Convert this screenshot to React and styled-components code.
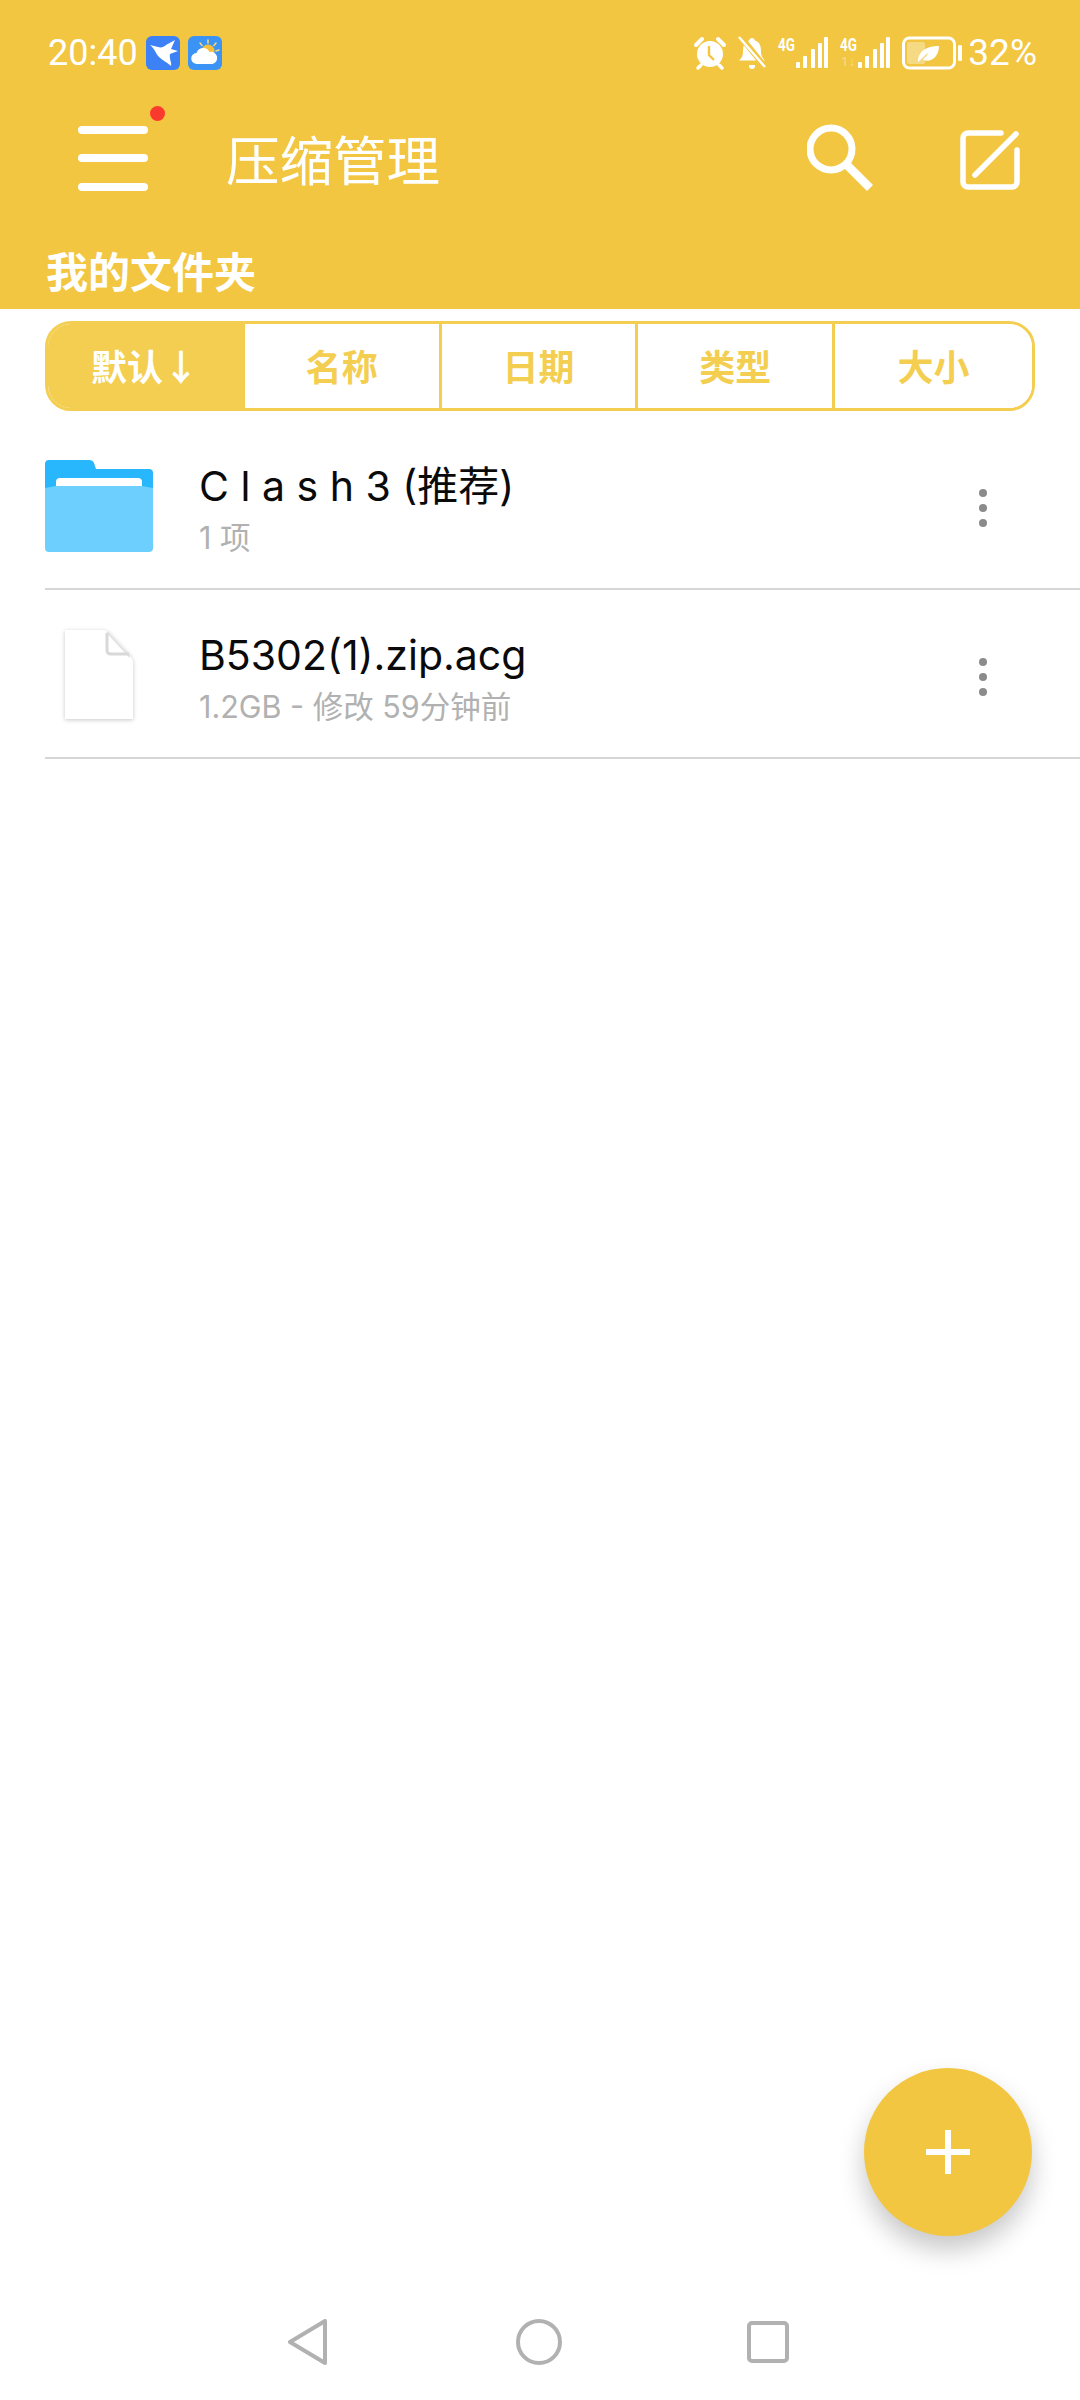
import React from "react";
import styled, { createGlobalStyle } from "styled-components";

const CJK = '"Noto Sans CJK SC"';
const YELLOW = "#f2c641";
const TAB = "#f3ce50";

const Global = createGlobalStyle`
  html, body { margin: 0; padding: 0; background: #fff; }
  * { box-sizing: border-box; }
  body { font-family: Roboto, ${CJK}, sans-serif; }
`;

const Page = styled.div`
  position: relative;
  width: 1080px;
  height: 2400px;
  display: flex;
  flex-direction: column;
  background: #fff;
  overflow: hidden;
`;
const Header = styled.header`
  background: ${YELLOW};
  height: 309px;
  display: flex;
  flex-direction: column;
  color: #fff;
`;
const StatusBar = styled.div`
  height: 72px;
  padding: 36px 43px 0 48px;
  display: flex;
  justify-content: space-between;
  align-items: flex-start;
`;
const StatusGroup = styled.div`
  display: flex;
  align-items: flex-start;
  gap: ${(p) => p.$gap}px;
`;
const StatusText = styled.span`
  font: 400 ${(p) => p.$size}px/34px Roboto, sans-serif;
  color: #fff;
  margin: ${(p) => p.$margin || "0"};
`;
const AppIcon = styled.svg`
  width: 34px;
  height: 34px;
  display: block;
`;
const StatusIcon = styled.svg`
  display: block;
  height: 34px;
  overflow: visible;
`;
const AppBar = styled.div`
  height: 172px;
  padding-right: 60px;
  display: flex;
  align-items: center;
`;
const MenuButton = styled.div`
  position: relative;
  width: 70px;
  height: 65px;
  margin-left: 78px;
  display: flex;
  flex-direction: column;
  justify-content: space-between;
`;
const MenuLine = styled.span`
  display: block;
  height: 8px;
  border-radius: 4px;
  background: #fff;
`;
const RedDot = styled.span`
  position: absolute;
  left: 72px;
  top: -20px;
  width: 15px;
  height: 15px;
  border-radius: 50%;
  background: #fb3a2e;
`;
const Title = styled.h1`
  margin: 0 0 0 78px;
  font: 400 53.5px/60px ${CJK}, sans-serif;
  color: #fff;
  flex: 1;
`;
const ToolIcons = styled.div`
  display: flex;
  align-items: center;
  gap: 85px;
`;
const ToolIcon = styled.svg`
  display: block;
  width: ${(p) => p.$w}px;
  height: ${(p) => p.$h}px;
  margin-top: ${(p) => p.$top || 0}px;
`;
const FolderLabel = styled.div`
  padding-left: 46px;
  font: 700 42px/52px ${CJK}, sans-serif;
  color: #fff;
`;
const Tabs = styled.div`
  margin: 12px 45px 0;
  height: 90px;
  display: grid;
  grid-template-columns: repeat(5, 1fr);
  border: 3px solid ${TAB};
  border-radius: 26px;
  overflow: hidden;
`;
const Tab = styled.div`
  display: flex;
  align-items: center;
  justify-content: center;
  padding-bottom: 2px;
  font: 700 36px/1 ${CJK}, sans-serif;
  color: ${(p) => (p.$active ? "#fff" : TAB)};
  background: ${(p) => (p.$active ? TAB : "#fff")};
  border-right: ${(p) => (p.$last ? "none" : `3px solid ${TAB}`)};
`;
const List = styled.div`
  margin-top: 10px;
  display: flex;
  flex-direction: column;
`;
const Row = styled.div`
  height: 169px;
  margin-left: 45px;
  padding-right: 93px;
  display: flex;
  align-items: center;
  border-bottom: 2px solid #d6d6d6;
`;
const IconCell = styled.div`
  width: 154px;
  flex: none;
  display: flex;
  padding-left: ${(p) => p.$pad}px;
  margin-top: 2px;
`;
const Texts = styled.div`
  flex: 1;
  display: flex;
  flex-direction: column;
  gap: 8px;
  padding-top: 6px;
`;
const Name = styled.div`
  font: 400 41px/52px Inter, ${CJK}, sans-serif;
  color: #0a0a0a;
  white-space: pre;
`;
const Sub = styled.div`
  font: 400 30.5px/36px Inter, ${CJK}, sans-serif;
  color: #b1b1b1;
  white-space: pre;
`;
const Dots = styled.div`
  display: flex;
  flex-direction: column;
  gap: 7px;
  margin-top: 6px;
`;
const Dot = styled.span`
  width: 8px;
  height: 8px;
  border-radius: 50%;
  background: #8b8b8b;
`;
const FileIcon = styled.svg`
  display: block;
  overflow: visible;
  filter: drop-shadow(0 1px 2px rgba(0, 0, 0, 0.22));
`;
const Fab = styled.div`
  position: absolute;
  left: 864px;
  top: 2068px;
  width: 168px;
  height: 168px;
  border-radius: 50%;
  background: ${YELLOW};
  box-shadow: 0 14px 26px rgba(0, 0, 0, 0.22);
  display: flex;
  align-items: center;
  justify-content: center;
`;
const NavBar = styled.nav`
  margin-top: auto;
  height: 116px;
  padding-right: 6px;
  display: flex;
  justify-content: center;
  align-items: center;
  gap: 186px;
`;
const NavIcon = styled.svg`
  display: block;
  width: 46px;
  height: 46px;
  margin-left: ${(p) => p.$shift || 0}px;
`;

const Signal = ({ sub }) => (
  <StatusIcon width="50" viewBox="0 0 50 34">
    <text x="0" y="15" fontFamily="Roboto, sans-serif" fontWeight="700" fontSize="18" fill="#fff" textLength="17" lengthAdjust="spacingAndGlyphs">4G</text>
    {sub && (
      <text x="1" y="30" fontFamily="Roboto, sans-serif" fontSize="12" fill="#fff" fillOpacity=".4" textLength="14" lengthAdjust="spacingAndGlyphs">1↓</text>
    )}
    <rect x="18" y="26" width="4" height="6" rx="1" fill="#fff" />
    <rect x="25" y="20" width="4" height="12" rx="1" fill="#fff" />
    <rect x="33" y="13" width="4" height="19" rx="1" fill="#fff" />
    <rect x="40" y="7" width="4" height="25" rx="1" fill="#fff" />
    <rect x="46" y="1" width="4" height="31" rx="1" fill="#fff" />
  </StatusIcon>
);

export default function App() {
  return (
    <Page>
      <Global />
      <Header>
        <StatusBar>
          <StatusGroup $gap={8}>
            <StatusText $size={36}>20:40</StatusText>
            <AppIcon viewBox="0 0 34 34">
              <rect width="34" height="34" rx="6" fill="#3c82f6" />
              <path d="M4 9 L12 11 C15 12 18 11 20 9 L29 4 L25 13 L32 15 L24 18 C23 23 26 27 25 30 C21 26 17 25 13 21 C10 18 9 13 4 9Z" fill="#fff" />
            </AppIcon>
            <AppIcon viewBox="0 0 34 34">
              <rect width="34" height="34" rx="6" fill="#3a93f5" />
              <circle cx="20" cy="15" r="6.5" fill="#f8bf3c" />
              <path d="M20 4v3M12 7l2 2.5M28 7l-2 2.5M31 14l-3 1" stroke="#f8d77a" strokeWidth="1.6" strokeLinecap="round" />
              <path d="M9 28a5.5 5.5 0 0 1-.5-11 7 7 0 0 1 13 -1 5.5 5.5 0 0 1 3 12Z" fill="#fff" />
            </AppIcon>
          </StatusGroup>
          <StatusGroup $gap={12}>
            <StatusIcon width="32" viewBox="0 0 32 34">
              <circle cx="16" cy="18" r="13" fill="#fff" />
              <path d="M2 9 L8 3 M30 9 L24 3" stroke="#fff" strokeWidth="4" strokeLinecap="round" />
              <path d="M7 29l-3 3M25 29l3 3" stroke="#fff" strokeWidth="3.5" strokeLinecap="round" />
              <path d="M15 10v9l5 5" fill="none" stroke={YELLOW} strokeWidth="2.4" />
            </StatusIcon>
            <StatusIcon width="28" viewBox="0 0 28 34">
              <path d="M14 2a3 3 0 0 1 3 2.5c5 1.5 6 6 6 11 0 4 1 6 4 9H1c3-3 4-5 4-9 0-5 1-9.500 6-11A3 3 0 0 1 14 2Z" fill="#fff" />
              <path d="M11 29h6v1a3 3 0 0 1-6 0Z" fill="#fff" />
              <path d="M3 1 L27 31" stroke={YELLOW} strokeWidth="6" />
              <path d="M1 1 L27 31" stroke="#fff" strokeWidth="2.4" />
            </StatusIcon>
            <Signal />
            <Signal sub />
            <StatusIcon width="60" viewBox="0 0 60 34">
              <rect x="1.500" y="2" width="51" height="30" rx="6" fill="none" stroke="#fff" strokeWidth="3" />
              <rect x="5" y="6" width="18" height="22" rx="2" fill="#fff" fillOpacity=".35" />
              <path d="M16 26 C16 14 26 10 37 10 C37 20 30 27 21 24 L27 16 L16 26Z" fill="#fff" />
              <rect x="56" y="9" width="4" height="16" rx="1.500" fill="#fff" />
            </StatusIcon>
            <StatusText $size={37} $margin="0 0 0 -6px">32%</StatusText>
          </StatusGroup>
        </StatusBar>
        <AppBar>
          <MenuButton>
            <MenuLine />
            <MenuLine />
            <MenuLine />
            <RedDot />
          </MenuButton>
          <Title>压缩管理</Title>
          <ToolIcons>
            <ToolIcon $w={68} $h={68} viewBox="0 0 68 68">
              <circle cx="24" cy="25" r="21" fill="none" stroke="#fff" strokeWidth="7" />
              <path d="M40 41 L63 64" stroke="#fff" strokeWidth="8.500" />
            </ToolIcon>
            <ToolIcon $w={60} $h={60} $top={3} viewBox="0 0 60 60">
              <path d="M41 3H8a5 5 0 0 0-5 5v44a5 5 0 0 0 5 5h44a5 5 0 0 0 5-5V20" fill="none" stroke="#fff" strokeWidth="5.500" strokeLinecap="round" />
              <path d="M56 4 L15 45" stroke="#fff" strokeWidth="5.500" strokeLinecap="round" />
            </ToolIcon>
          </ToolIcons>
        </AppBar>
        <FolderLabel>我的文件夹</FolderLabel>
      </Header>
      <Tabs>
        <Tab $active>默认<span>↓</span></Tab>
        <Tab>名称</Tab>
        <Tab>日期</Tab>
        <Tab>类型</Tab>
        <Tab $last>大小</Tab>
      </Tabs>
      <List>
        <Row>
          <IconCell $pad={0}>
            <svg width="108" height="92" viewBox="0 0 108 92">
              <path d="M4 0H44c3 0 4 1 5 3l2 6H104a4 4 0 0 1 4 4V40H0V4a4 4 0 0 1 4-4Z" fill="#28b6fd" />
              <path d="M11 22a4 4 0 0 1 4-4h78a4 4 0 0 1 4 4v10H11Z" fill="#fff" />
              <path d="M0 28 L11 26 H97 L108 28 V88a4 4 0 0 1-4 4H4a4 4 0 0 1-4-4Z" fill="#6dcffd" />
            </svg>
          </IconCell>
          <Texts>
            <Name>C l a s h 3 (推荐)</Name>
            <Sub>1 项</Sub>
          </Texts>
          <Dots><Dot /><Dot /><Dot /></Dots>
        </Row>
        <Row>
          <IconCell $pad={18}>
            <FileIcon width="72" height="92" viewBox="0 0 72 92">
              <path d="M2 1H40Q43 1 45 3L68 28Q70 30 70 34V90H2Z" fill="#fff" />
              <path d="M44 3L67 28" fill="none" stroke="#e4e4e4" strokeWidth="2" />
              <path d="M44 4V21Q44 25 48 25H66" fill="none" stroke="#d8d8d8" strokeWidth="3" />
            </FileIcon>
          </IconCell>
          <Texts>
            <Name>B5302(1).zip.acg</Name>
            <Sub>1.2GB - 修改 59分钟前</Sub>
          </Texts>
          <Dots><Dot /><Dot /><Dot /></Dots>
        </Row>
      </List>
      <Fab>
        <svg width="44" height="44" viewBox="0 0 44 44">
          <path d="M22 0V44M0 22H44" stroke="#fff" strokeWidth="6" />
        </svg>
      </Fab>
      <NavBar>
        <NavIcon viewBox="0 0 46 46">
          <path d="M41 2 V44 L6 23Z" fill="none" stroke="#b1b1b1" strokeWidth="4" strokeLinejoin="round" />
        </NavIcon>
        <NavIcon viewBox="0 0 46 46">
          <circle cx="23" cy="23" r="21" fill="none" stroke="#b1b1b1" strokeWidth="4" />
        </NavIcon>
        <NavIcon $shift={-3} viewBox="0 0 46 46">
          <rect x="4" y="4" width="38" height="38" rx="3" fill="none" stroke="#b1b1b1" strokeWidth="4" />
        </NavIcon>
      </NavBar>
    </Page>
  );
}
